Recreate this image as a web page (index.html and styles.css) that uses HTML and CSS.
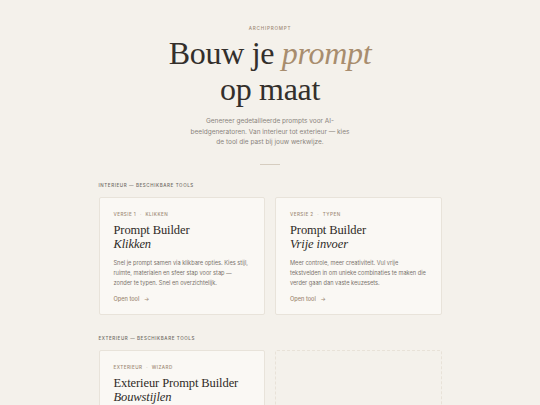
FILE: index.html
```html
<!DOCTYPE html>
<html lang="nl">
<head>
<meta charset="utf-8">
<title>ArchiPrompt</title>
<link rel="stylesheet" href="styles.css">
</head>
<body>
<main class="page">
  <header class="hero">
    <div class="brand">ARCHIPROMPT</div>
    <h1 class="title">Bouw je <em>prompt</em><br>op maat</h1>
    <p class="lead">Genereer gedetailleerde prompts voor AI-beeldgeneratoren. Van interieur tot exterieur — kies de tool die past bij jouw werkwijze.</p>
    <div class="rule"></div>
  </header>

  <section class="section">
    <div class="label">INTERIEUR — BESCHIKBARE TOOLS</div>
    <div class="grid">
      <article class="card">
        <div class="meta">VERSIE 1 <span class="dot">·</span> KLIKKEN</div>
        <h2 class="card-title">Prompt Builder<br><em>Klikken</em></h2>
        <p class="desc">Snel je prompt samen via klikbare opties. Kies stijl, ruimte, materialen en sfeer stap voor stap — zonder te typen. Snel en overzichtelijk.</p>
        <div class="link">Open tool <span class="arrow">→</span></div>
      </article>
      <article class="card">
        <div class="meta">VERSIE 2 <span class="dot">·</span> TYPEN</div>
        <h2 class="card-title">Prompt Builder<br><em>Vrije invoer</em></h2>
        <p class="desc">Meer controle, meer creativiteit. Vul vrije tekstvelden in om unieke combinaties te maken die verder gaan dan vaste keuzesets.</p>
        <div class="link">Open tool <span class="arrow">→</span></div>
      </article>
    </div>
  </section>

  <section class="section">
    <div class="label">EXTERIEUR — BESCHIKBARE TOOLS</div>
    <div class="grid">
      <article class="card">
        <div class="meta">EXTERIEUR <span class="dot">·</span> WIZARD</div>
        <h2 class="card-title">Exterieur Prompt Builder<br><em>Bouwstijlen</em></h2>
        <p class="desc">Doorloop een wizard met bouwstijlen, materialen, omgeving en licht om een exterieur prompt samen te stellen.</p>
        <div class="link">Open tool <span class="arrow">→</span></div>
      </article>
      <div class="card placeholder"></div>
    </div>
  </section>
</main>
</body>
</html>
```

FILE: styles.css
```css
* { box-sizing: border-box; }
html, body { margin: 0; padding: 0; }
body {
  background: #f4f1eb;
  font-family: "Inter", "Lato", "Liberation Sans", sans-serif;
  color: #3a3633;
  width: 540px;
  overflow: hidden;
}
.page {
  width: 343px;
  margin: 0 auto;
  padding-top: 25px;
}
.hero {
  display: flex;
  flex-direction: column;
  align-items: center;
  text-align: center;
}
.brand {
  font-size: 4.6px;
  letter-spacing: 0.8px;
  color: #a08a75;
  font-weight: 500;
  line-height: 7px;
}
.title {
  margin: 3px 0 0;
  font-family: "Liberation Serif", "DejaVu Serif", serif;
  font-weight: 400;
  font-size: 32px;
  line-height: 36px;
  color: #332f2b;
  letter-spacing: -0.3px;
}
.title em {
  color: #a88d6e;
  font-style: italic;
}
.lead {
  margin: 9px 0 0;
  width: 164px;
  font-size: 6.5px;
  line-height: 10.5px;
  color: #8a847d;
}
.rule {
  width: 20px;
  height: 1px;
  background: #d6cdc0;
  margin-top: 16px;
}
.section { margin-top: 17px; }
.section + .section { margin-top: 20px; }
.label {
  font-size: 4.5px;
  letter-spacing: 0.6px;
  color: #6f6a64;
  font-weight: 500;
  line-height: 7px;
}
.grid {
  display: grid;
  grid-template-columns: 1fr 1fr;
  gap: 10px;
  margin-top: 8.5px;
}
.card {
  background: #faf8f4;
  border: 1px solid #e8e3da;
  border-radius: 2px;
  padding: 12.5px 14px 11px 14px;
}
.placeholder {
  background: transparent;
  border: 1px dashed #e8e2d8;
}
.meta {
  font-size: 4.6px;
  letter-spacing: 0.45px;
  color: #a08a75;
  font-weight: 500;
  line-height: 7px;
}
.dot { margin: 0 2px; color: #c4b6a6; }
.card-title {
  margin: 5px 0 0;
  font-family: "Liberation Serif", "DejaVu Serif", serif;
  font-weight: 400;
  font-size: 12.5px;
  line-height: 14px;
  color: #2e2a26;
  letter-spacing: -0.1px;
}
.card-title em { font-style: italic; }
.desc {
  margin: 7px 0 0;
  font-size: 5.65px;
  line-height: 10px;
  color: #7a746d;
}
.link {
  margin-top: 7px;
  font-size: 5.6px;
  color: #a08a75;
  font-weight: 500;
  line-height: 8px;
}
.arrow { margin-left: 3px; }
```
